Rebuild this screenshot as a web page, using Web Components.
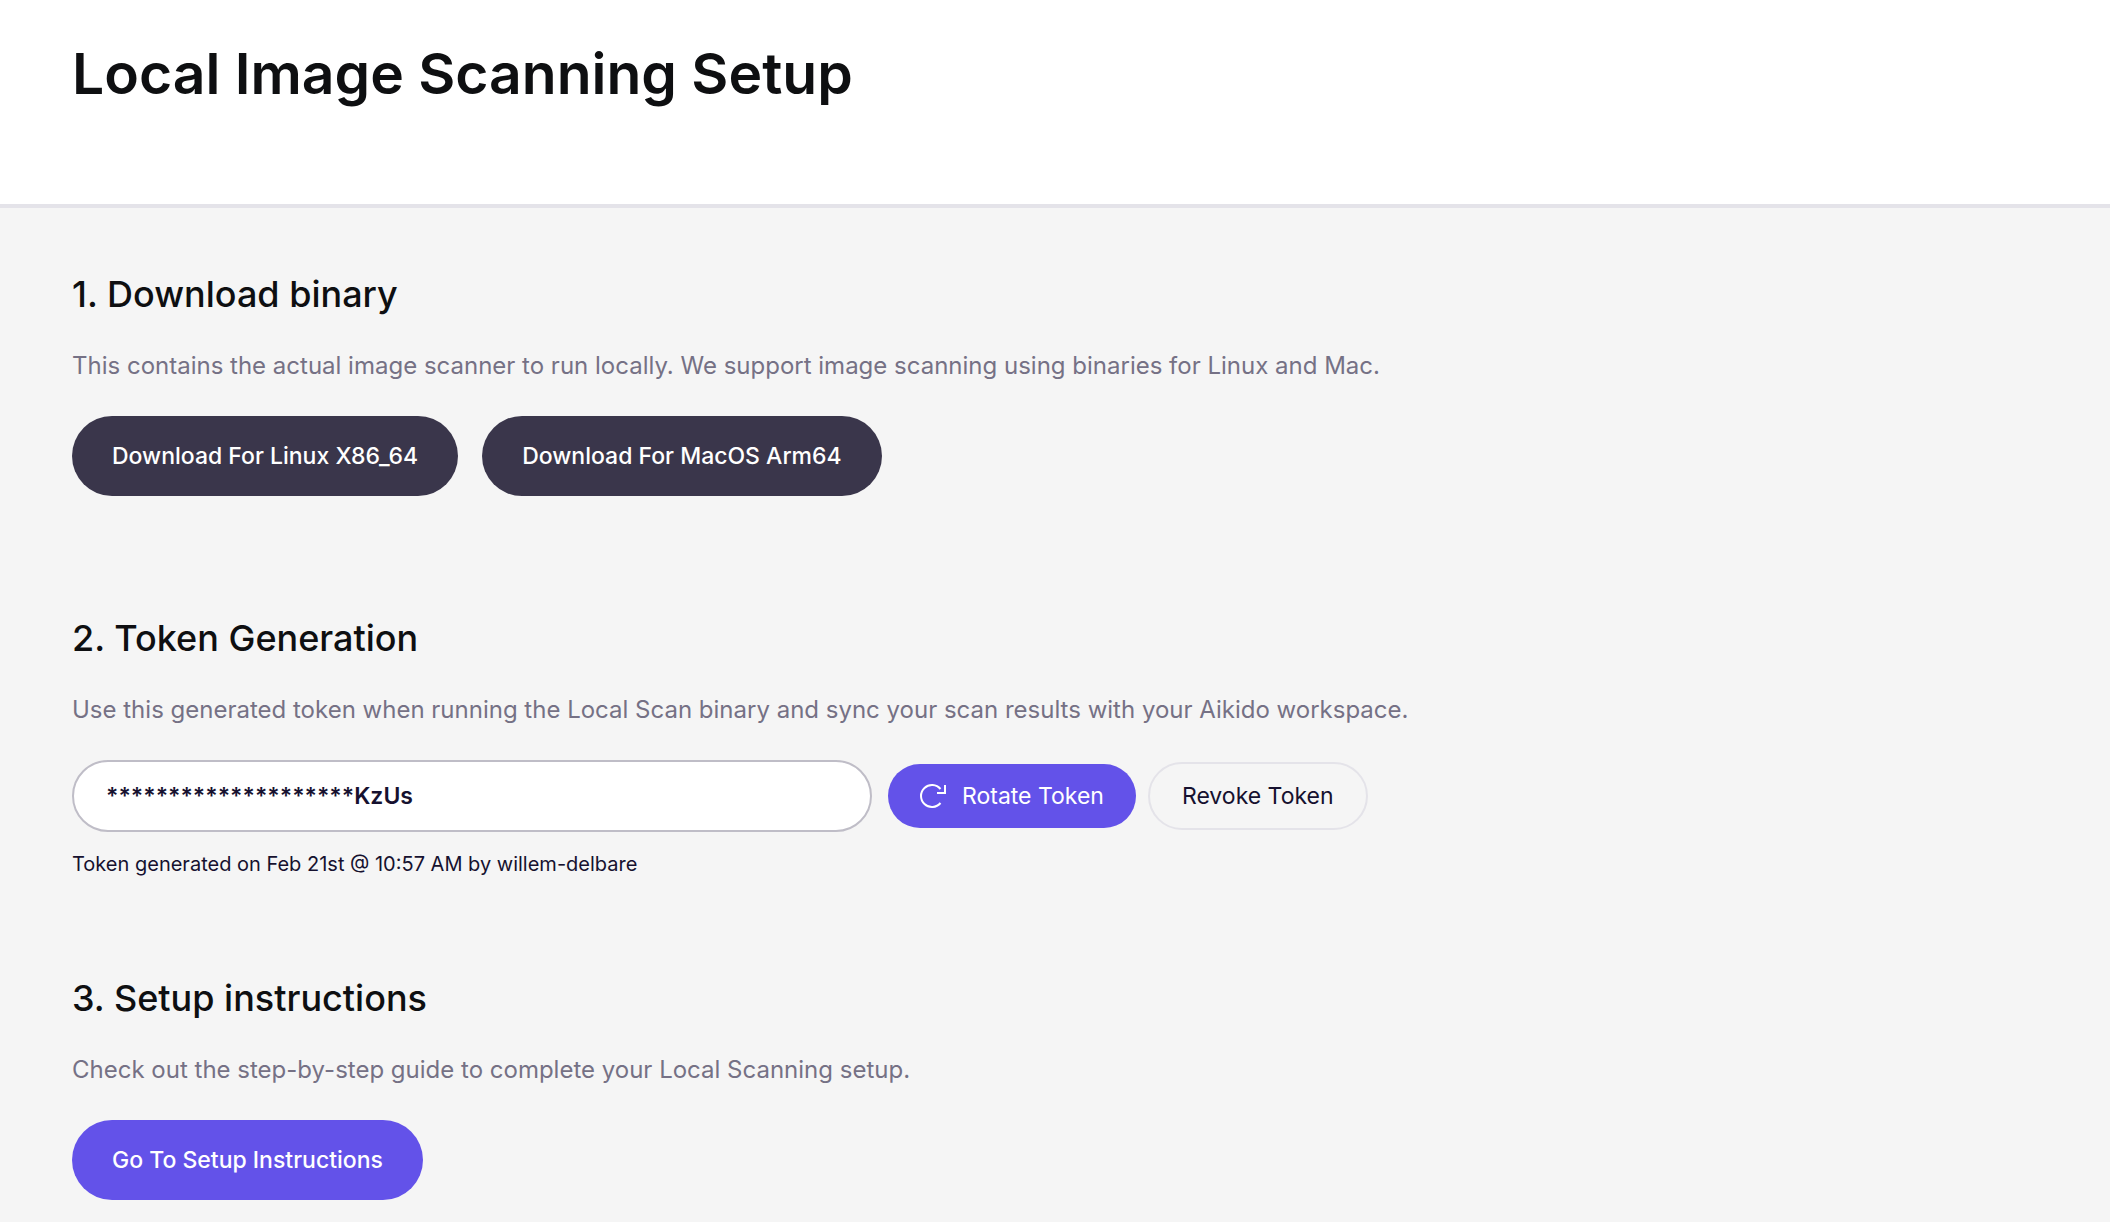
<!DOCTYPE html>
<html lang="en">
<head>
<meta charset="utf-8">
<title>Local Image Scanning Setup</title>
<style>
  html { background: #f5f5f5; }
  body { margin: 0; font-family: Inter, "Liberation Sans", sans-serif; color: #16112f; }
</style>
</head>
<body>
<setup-page>
  <page-header>Local Image Scanning Setup</page-header>
  <setup-step heading="1. Download binary" description="This contains the actual image scanner to run locally. We support image scanning using binaries for Linux and Mac.">
    <pill-button variant="dark">Download For Linux X86_64</pill-button>
    <pill-button variant="dark">Download For MacOS Arm64</pill-button>
  </setup-step>
  <setup-step heading="2. Token Generation" description="Use this generated token when running the Local Scan binary and sync your scan results with your Aikido workspace.">
    <token-field value="********************KzUs">Token generated on Feb 21st @ 10:57 AM by willem-delbare</token-field>
  </setup-step>
  <setup-step heading="3. Setup instructions" description="Check out the step-by-step guide to complete your Local Scanning setup.">
    <pill-button variant="primary">Go To Setup Instructions</pill-button>
  </setup-step>
</setup-page>
<script>
  class BaseElement extends HTMLElement {
    render(html) {
      this.attachShadow({ mode: 'open' }).innerHTML =
        '<style>*, *::before { box-sizing: border-box; }</style>' + html;
    }
  }

  customElements.define('setup-page', class extends BaseElement {
    connectedCallback() {
      this.render(`
        <style>
          :host { display: block; }
          main { display: flex; flex-direction: column; }
        </style>
        <main><slot></slot></main>`);
    }
  });

  customElements.define('page-header', class extends BaseElement {
    connectedCallback() {
      this.render(`
        <style>
          :host { display: block; background: #fff; border-bottom: 4px solid #e4e3e9; padding: 40px 72px 96px; margin-bottom: 64px; }
          h1 { margin: 0; font-size: 57px; line-height: 68px; font-weight: 600; color: #0e0f11; }
        </style>
        <h1><slot></slot></h1>`);
    }
  });

  customElements.define('setup-step', class extends BaseElement {
    connectedCallback() {
      this.render(`
        <style>
          :host { display: block; padding: 0 72px; margin-bottom: 96px; }
          :host(:last-of-type) { margin-bottom: 0; }
          section { display: flex; flex-direction: column; gap: 32px; }
          h2 { margin: 0; font-size: 36px; line-height: 44px; font-weight: 500; color: #0e0f11; }
          p { margin: 0; font-size: 24px; line-height: 36px; color: #757185; }
          .body { display: flex; flex-wrap: wrap; gap: 24px; }
          ::slotted(pill-button) { margin-bottom: 24px; }
        </style>
        <section>
          <h2>${this.getAttribute('heading')}</h2>
          <p>${this.getAttribute('description')}</p>
          <div class="body"><slot></slot></div>
        </section>`);
    }
  });

  customElements.define('pill-button', class extends BaseElement {
    connectedCallback() {
      this.render(`
        <style>
          :host { display: inline-flex; }
          button { display: flex; align-items: center; gap: 16px; height: 80px; margin: 0; padding: 0 40px; border: 0; border-radius: 40px; font: 500 23px/32px Inter, "Liberation Sans", sans-serif; color: #fff; white-space: nowrap; cursor: pointer; }
          :host([variant="dark"]) button { background: #3a364b; }
          :host([variant="primary"]) button { background: #6352e9; }
          :host([size="small"]) button { height: 64px; padding: 0 32px; font-weight: 400; }
          :host([variant="outline"]) button { height: 68px; border: 2px solid #e4e3e9; background: transparent; color: #16112f; }
        </style>
        <button type="button"><slot name="icon"></slot><slot></slot></button>`);
    }
  });

  customElements.define('token-field', class extends BaseElement {
    connectedCallback() {
      this.render(`
        <style>
          :host { display: flex; flex-direction: column; gap: 16px; }
          .row { display: flex; align-items: center; gap: 16px; }
          .actions { display: flex; align-items: center; gap: 12px; }
          input { width: 800px; height: 72px; margin: 0; padding: 0 32px; border: 2px solid #bfbdc7; border-radius: 36px; background: #fff; font: 600 23px/32px Inter, "Liberation Sans", sans-serif; color: #16112f; outline: none; }
          label { font-size: 20px; line-height: 32px; }
          svg { display: block; width: 26px; height: 28px; }
        </style>
        <div class="row">
          <input id="token" type="text" readonly value="${this.getAttribute('value')}">
          <div class="actions">
            <pill-button variant="primary" size="small">
              <svg slot="icon" viewBox="0 0 26 28" fill="none" stroke="#fff" stroke-width="2" aria-hidden="true">
                <path d="M20.5 7A11 11 0 1 0 20.5 21M25 3V11H17"/>
              </svg>Rotate Token</pill-button>
            <pill-button variant="outline" size="small">Revoke Token</pill-button>
          </div>
        </div>
        <label for="token"><slot></slot></label>`);
    }
  });
</script>
</body>
</html>
